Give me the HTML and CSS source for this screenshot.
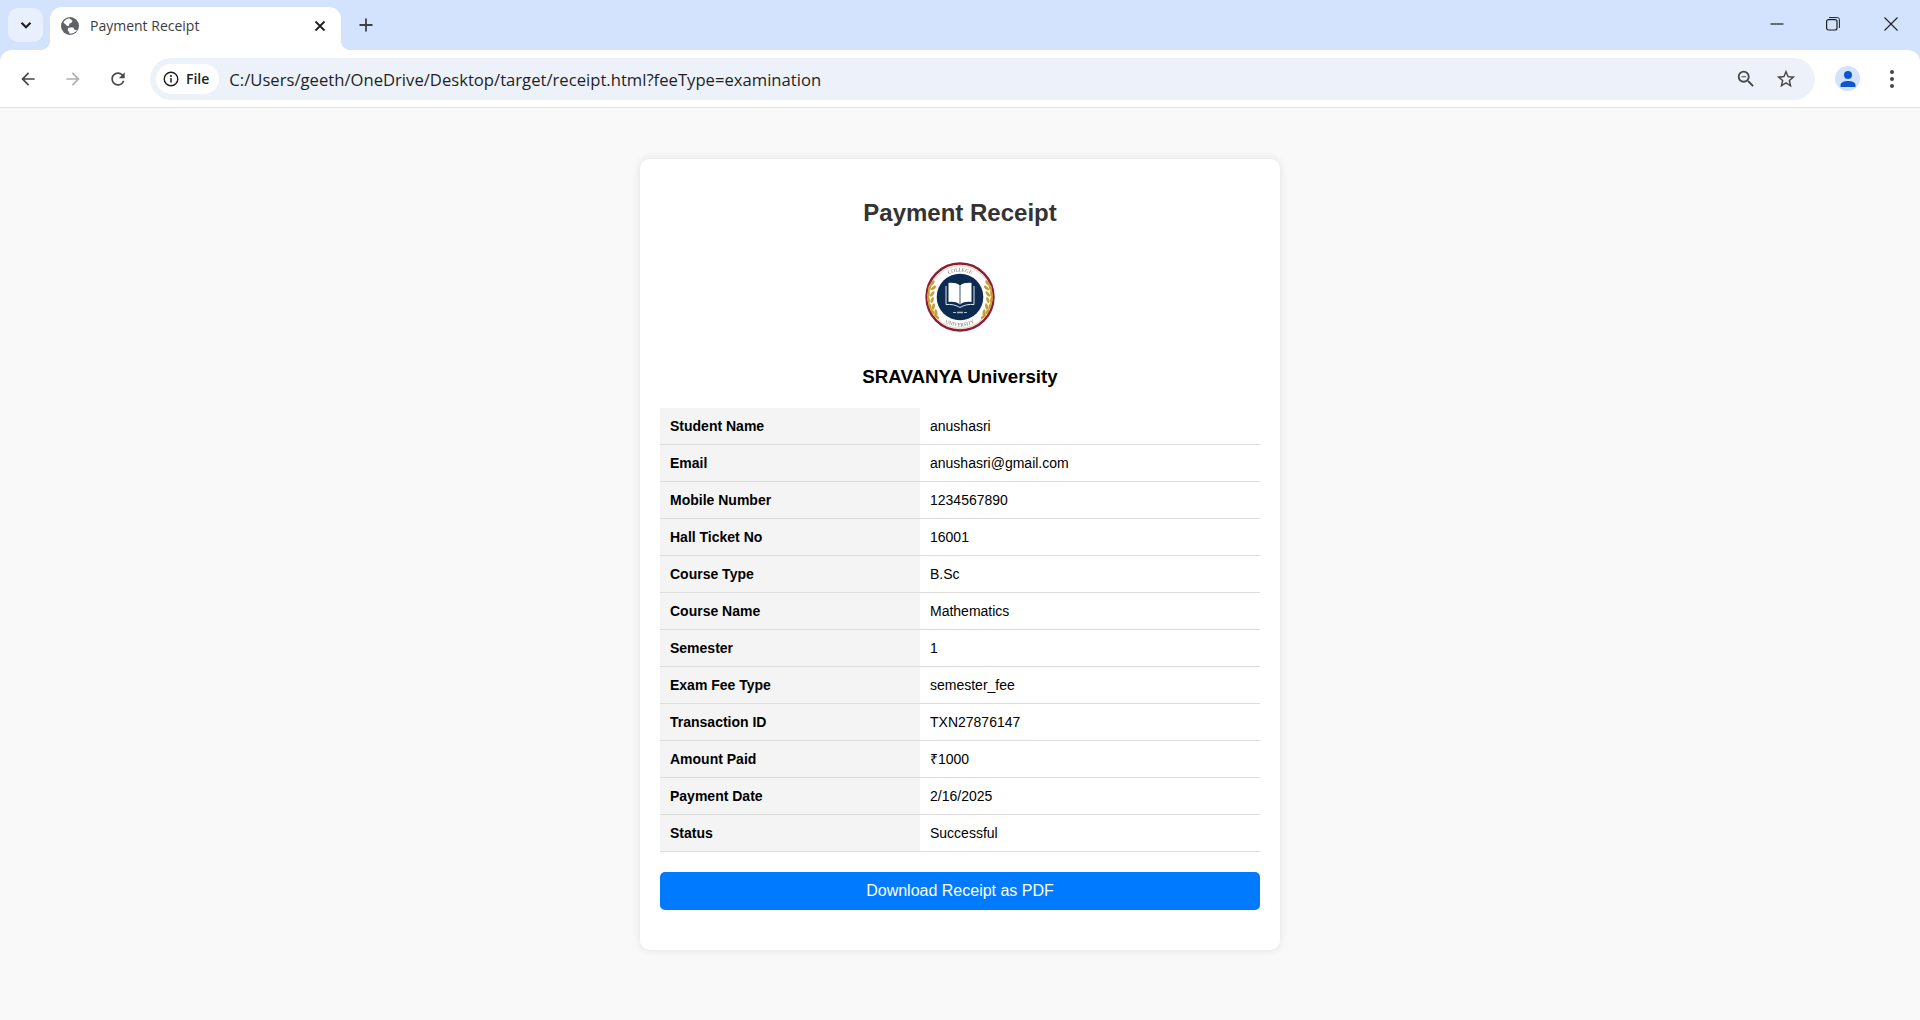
FILE: index.html
```html
<!DOCTYPE html>
<html lang="en">

<head>
  <meta charset="UTF-8">
  <meta name="viewport" content="width=device-width, initial-scale=1.0">
  <title>Payment Receipt</title>
  <link rel="stylesheet" href="styles.css">
</head>

<body>
  <div class="browser">
    <div class="tabstrip">
      <div class="tab-search">
        <svg width="16" height="16" viewBox="0 0 16 16"><path d="M3.5 5.8 8 10.3l4.5-4.5" fill="none" stroke="#1f1f1f" stroke-width="2.2"/></svg>
      </div>
      <div class="tab">
        <svg class="tab-favicon" width="18" height="18" viewBox="0 0 18 18">
          <circle cx="9" cy="9" r="9" fill="#5f6368"/>
          <path d="M8.2 1.2C5.6 1.6 3.5 3.2 2.4 5.400l3.500 3.300c.9.800 2.100.500 2.300-.600l.2-1.400 2.300-1.300c.8-.5.800-1.500.3-2.100L8.200 1.200zM10 10.500l-2.700.2-.6 2.100 2.100 3.900c2.600.1 5.500-1.100 7.300-3.500l-2.700-.5-1.100-2.100-2.300-.1z" fill="#fff"/>
        </svg>
        <span class="tab-title">Payment Receipt</span>
        <svg class="tab-close" width="12" height="12" viewBox="0 0 12 12"><path d="M1.500 1.500l9 9m0-9l-9 9" stroke="#1f1f1f" stroke-width="1.800"/></svg>
      </div>
      <svg class="new-tab" width="14" height="14" viewBox="0 0 14 14"><path d="M7 .5v13M.5 7h13" stroke="#3c4043" stroke-width="1.800"/></svg>
      <div class="window-btns">
        <svg width="14" height="14" viewBox="0 0 14 14"><path d="M.5 7h13" stroke="#1f1f1f" stroke-width="1.200"/></svg>
        <svg class="restore-btn" width="14" height="14" viewBox="0 0 14 14"><rect x=".6" y="2.600" width="10.400" height="10.400" rx="2" fill="none" stroke="#1f1f1f" stroke-width="1.200"/><path d="M3 .6h8.400A2 2 0 0 1 13.400 2.600V11" fill="none" stroke="#1f1f1f" stroke-width="1"/></svg>
        <svg width="14" height="14" viewBox="0 0 14 14"><path d="M.5.5l13 13m0-13l-13 13" stroke="#1f1f1f" stroke-width="1.100"/></svg>
      </div>
    </div>

    <div class="toolbar">
      <div class="nav-btns">
        <svg width="20" height="20" viewBox="0 0 24 24"><path d="M20 11H7.830l5.590-5.590L12 4l-8 8 8 8 1.410-1.410L7.830 13H20v-2z" fill="#474747"/></svg>
        <svg width="20" height="20" viewBox="0 0 24 24"><path d="M4 11h12.170l-5.590-5.590L12 4l8 8-8 8-1.410-1.410L16.170 13H4v-2z" fill="#b0b0b0"/></svg>
        <svg width="20" height="20" viewBox="0 0 24 24"><path d="M17.650 6.350A7.958 7.958 0 0 0 12 4c-4.420 0-7.990 3.580-7.990 8s3.570 8 7.990 8c3.730 0 6.840-2.550 7.730-6h-2.080A5.990 5.990 0 0 1 12 18c-3.310 0-6-2.690-6-6s2.690-6 6-6c1.660 0 3.140.690 4.220 1.780L13 11h7V4l-2.350 2.350z" fill="#474747"/></svg>
      </div>
      <div class="omnibox">
        <div class="file-chip">
          <svg width="16" height="16" viewBox="0 0 16 16"><circle cx="8" cy="8" r="6.800" fill="none" stroke="#1f1f1f" stroke-width="1.400"/><path d="M8 7v4.500" stroke="#1f1f1f" stroke-width="1.500"/><circle cx="8" cy="4.900" r="1" fill="#1f1f1f"/></svg>
          <span>File</span>
        </div>
        <span class="url">C:/Users/geeth/OneDrive/Desktop/target/receipt.html?feeType=examination</span>
        <svg class="omni-zoom" width="22" height="22" viewBox="0 0 24 24"><path d="M15.500 14h-.790l-.280-.270A6.471 6.471 0 0 0 16 9.500 6.500 6.500 0 1 0 9.500 16c1.610 0 3.090-.590 4.230-1.570l.270.280v.790l5 4.990L20.490 19l-4.990-5zm-6 0C7.010 14 5 11.990 5 9.500S7.010 5 9.500 5 14 7.010 14 9.500 11.990 14 9.500 14zM7 9h5v1H7z" fill="#474747"/></svg>
        <svg class="omni-star" width="22" height="22" viewBox="0 0 24 24"><path d="M22 9.240l-7.190-.620L12 2 9.190 8.630 2 9.240l5.460 4.730L5.820 21 12 17.270 18.180 21l-1.630-7.030L22 9.240zM12 15.400l-3.760 2.270 1-4.280-3.320-2.880 4.380-.380L12 6.100l1.710 4.040 4.380.380-3.320 2.880 1 4.280L12 15.400z" fill="#474747"/></svg>
      </div>
      <div class="avatar">
        <svg width="18" height="18" viewBox="0 0 18 18"><circle cx="9" cy="5" r="4" fill="#0b57d0"/><path d="M1.500 17v-2c0-2.500 3.500-4 7.500-4s7.500 1.500 7.500 4v2z" fill="#0b57d0"/></svg>
      </div>
      <svg class="menu-dots" width="6" height="20" viewBox="0 0 6 20"><circle cx="3" cy="3" r="2" fill="#474747"/><circle cx="3" cy="10" r="2" fill="#474747"/><circle cx="3" cy="17" r="2" fill="#474747"/></svg>
    </div>
  </div>

  <div class="page">
    <div class="receipt">
      <h2 class="receipt-title">Payment Receipt</h2>

      <svg class="logo" width="100" height="100" viewBox="0 0 100 100">
        <defs>
          <path id="arc-top" d="M24.500 50a25.500 25.500 0 0 1 51 0"/>
          <path id="arc-bottom" d="M20.500 50a29.500 29.500 0 0 0 59 0"/>
          <g id="leaf-side" fill="#c99f2f">
            <ellipse cx="22.500" cy="36" rx="1.400" ry="3.200" transform="rotate(35 22.500 36)"/>
            <ellipse cx="19.500" cy="41" rx="1.400" ry="3.200" transform="rotate(15 19.500 41)"/>
            <ellipse cx="23.500" cy="41" rx="1.400" ry="3.200" transform="rotate(50 23.500 41)"/>
            <ellipse cx="18.500" cy="47" rx="1.400" ry="3.200" transform="rotate(5 18.500 47)"/>
            <ellipse cx="22.200" cy="47" rx="1.400" ry="3.200" transform="rotate(35 22.200 47)"/>
            <ellipse cx="18.500" cy="53" rx="1.400" ry="3.200" transform="rotate(-8 18.500 53)"/>
            <ellipse cx="22.200" cy="53" rx="1.400" ry="3.200" transform="rotate(20 22.200 53)"/>
            <ellipse cx="20" cy="59" rx="1.400" ry="3.200" transform="rotate(-22 20 59)"/>
            <ellipse cx="23.500" cy="59.500" rx="1.400" ry="3.200" transform="rotate(8 23.500 59.500)"/>
            <ellipse cx="22.500" cy="64.500" rx="1.400" ry="3.200" transform="rotate(-35 22.500 64.500)"/>
            <ellipse cx="26" cy="65.500" rx="1.400" ry="3.200" transform="rotate(-8 26 65.500)"/>
            <ellipse cx="26.500" cy="69.500" rx="1.400" ry="3.200" transform="rotate(-50 26.500 69.500)"/>
          </g>
        </defs>
        <circle cx="50" cy="50" r="33.500" fill="#fff" stroke="#8c1c3a" stroke-width="2.400"/>
        <circle cx="50" cy="50" r="31.300" fill="none" stroke="#d3b36a" stroke-width=".6"/>
        <use href="#leaf-side"/>
        <use href="#leaf-side" transform="matrix(-1 0 0 1 100 0)"/>
        <circle cx="50" cy="50" r="23.300" fill="#0d2b50"/>
        <path d="M50 38.500c-3-2.500-7.500-3-11.500-2.500v19c4-.5 8.500 0 11.500 2.500 3-2.500 7.500-3 11.500-2.500V36c-4-.5-8.500 0-11.500 2.500z" fill="#fff"/>
        <path d="M50 38.500v19" fill="none" stroke="#0d2b50" stroke-width=".8"/>
        <path d="M36 39v18.500c5-.5 10 .5 14 3 4-2.500 9-3.500 14-3V39" fill="none" stroke="#dfe5ec" stroke-width="1"/>
        <path d="M43 65.500h3M54 65.500h3" stroke="#dfe5ec" stroke-width=".8"/>
        <path d="M47 65.500h6" stroke="#aab6c4" stroke-width="1.600"/>
        <text class="logo-text"><textPath href="#arc-top" startOffset="50%" text-anchor="middle">COLLEGE</textPath></text>
        <text class="logo-text"><textPath href="#arc-bottom" startOffset="50%" text-anchor="middle">UNIVERSITY</textPath></text>
      </svg>

      <h3 class="uni-name">SRAVANYA University</h3>

      <table class="receipt-table">
        <tr><th>Student Name</th><td>anushasri</td></tr>
        <tr><th>Email</th><td>anushasri@gmail.com</td></tr>
        <tr><th>Mobile Number</th><td>1234567890</td></tr>
        <tr><th>Hall Ticket No</th><td>16001</td></tr>
        <tr><th>Course Type</th><td>B.Sc</td></tr>
        <tr><th>Course Name</th><td>Mathematics</td></tr>
        <tr><th>Semester</th><td>1</td></tr>
        <tr><th>Exam Fee Type</th><td>semester_fee</td></tr>
        <tr><th>Transaction ID</th><td>TXN27876147</td></tr>
        <tr><th>Amount Paid</th><td>₹1000</td></tr>
        <tr><th>Payment Date</th><td>2/16/2025</td></tr>
        <tr><th>Status</th><td>Successful</td></tr>
      </table>

      <button class="download-btn">Download Receipt as PDF</button>
    </div>
  </div>
</body>

</html>
```

FILE: styles.css
```css
* {
  margin: 0;
  padding: 0;
  box-sizing: border-box;
}

html,
body {
  height: 100%;
}

body {
  display: flex;
  flex-direction: column;
  background-color: #f9f9f9;
  font-family: "Liberation Sans", Arial, sans-serif;
  overflow: hidden;
}

/* browser window */
.browser {
  background-color: #d3e3fd;
  font-family: "Open Sans", "Noto Sans", sans-serif;
}

.tabstrip {
  height: 50px;
  display: flex;
  align-items: flex-end;
  padding-left: 8px;
}

.tab-search {
  width: 35px;
  height: 34px;
  margin-bottom: 8px;
  border-radius: 10px;
  background-color: #e9f0fd;
  display: flex;
  align-items: center;
  justify-content: center;
}

.tab {
  position: relative;
  width: 291px;
  height: 43px;
  margin-left: 7px;
  padding: 0 15px 6px 11px;
  display: flex;
  align-items: center;
  background-color: #fff;
  border-radius: 12px 12px 0 0;
}

.tab::before,
.tab::after {
  content: "";
  position: absolute;
  bottom: 0;
  width: 10px;
  height: 10px;
}

.tab::before {
  left: -10px;
  background: radial-gradient(circle at 0 0, transparent 10px, #fff 10.5px);
}

.tab::after {
  right: -10px;
  background: radial-gradient(circle at 100% 0, transparent 10px, #fff 10.5px);
}

.tab-favicon {
  flex-shrink: 0;
}

.tab-title {
  flex: 1;
  margin-left: 11px;
  font-size: 14px;
  color: #3c3c3c;
}

.new-tab {
  margin: 0 0 18px 18px;
}

.window-btns {
  margin-left: auto;
  margin-bottom: 19px;
  padding-right: 22px;
  display: flex;
  gap: 42px;
}

.restore-btn {
  margin-right: 2px;
}

.toolbar {
  position: relative;
  height: 58px;
  padding: 8px 0 8px 18px;
  display: flex;
  align-items: center;
  background-color: #fff;
  border-radius: 12px 12px 0 0;
  border-bottom: 1px solid #e3e3e3;
}

.nav-btns {
  display: flex;
  gap: 25px;
}

.omnibox {
  width: 1665px;
  height: 42px;
  margin-left: 22px;
  padding: 0 18px 0 6px;
  display: flex;
  align-items: center;
  background-color: #edf2fa;
  border-radius: 21px;
}

.file-chip {
  height: 30px;
  padding: 0 10px 0 7px;
  display: flex;
  align-items: center;
  gap: 7px;
  background-color: #fff;
  border-radius: 15px;
  font-size: 14px;
  font-weight: 600;
  color: #1f1f1f;
}

.url {
  flex: 1;
  margin-left: 10px;
  padding-top: 1px;
  font-size: 16.65px;
  color: #1f1f1f;
  white-space: nowrap;
}

.omni-star {
  margin-left: 18px;
}

.avatar {
  width: 25px;
  height: 25px;
  margin-left: 20px;
  border-radius: 50%;
  background-color: #d3e3fd;
  display: flex;
  align-items: center;
  justify-content: center;
}

.menu-dots {
  margin-left: 29px;
}

/* receipt */
.page {
  flex: 1;
  padding-top: 51px;
}

.receipt {
  width: 640px;
  margin: 0 auto;
  padding: 20px 20px 40px;
  background-color: #fff;
  border-radius: 10px;
  box-shadow: 0 0 10px rgba(0, 0, 0, .1);
  text-align: center;
}

.receipt-title {
  margin-top: 20px;
  font-size: 24px;
  line-height: 28px;
  color: #333;
}

.logo {
  display: block;
  margin: 20px auto 0;
  filter: blur(.25px);
}

.logo-text {
  font-family: "Liberation Serif", serif;
  font-size: 5.2px;
  fill: #6f6f6f;
}

.uni-name {
  margin: 19px 0 21px;
  font-size: 18.72px;
  line-height: 21px;
  color: #000;
}

.receipt-table {
  width: 100%;
  border-collapse: collapse;
  font-size: 14px;
  line-height: 16px;
  text-align: left;
}

.receipt-table th,
.receipt-table td {
  padding: 10px;
  border-bottom: 1px solid #ddd;
}

.receipt-table th {
  width: 260px;
  background-color: #f4f4f4;
}

.download-btn {
  width: 100%;
  height: 38px;
  margin-top: 20px;
  display: block;
  border: none;
  border-radius: 5px;
  background-color: #007bff;
  color: #fff;
  font-family: inherit;
  font-size: 16px;
}
```
